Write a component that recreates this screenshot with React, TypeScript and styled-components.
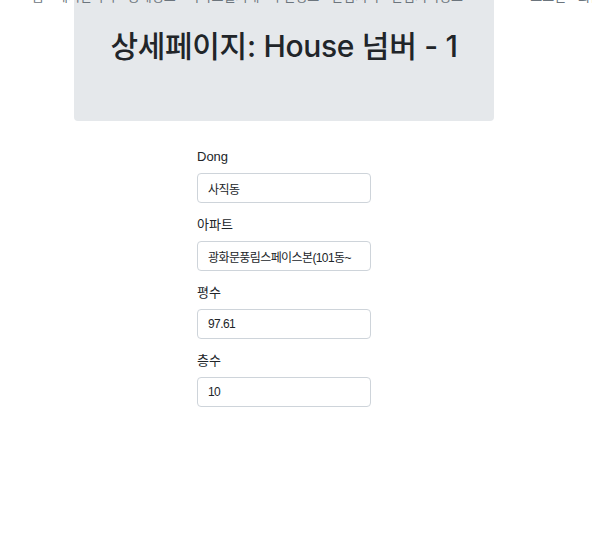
import React from "react";
import styled, { createGlobalStyle } from "styled-components";

const Global = createGlobalStyle`
  html, body { margin: 0; padding: 0; background: #fff; }
  body {
    font-family: "Liberation Sans", "Noto Sans CJK KR", sans-serif;
    color: #212529;
    overflow: hidden;
  }
`;

const Page = styled.div`
  position: relative;
  width: 592px;
  height: 539px;
`;

const Nav = styled.nav`
  position: absolute;
  left: 0;
  right: 0;
  top: -12px;
  height: 16px;
  display: flex;
  align-items: flex-end;
  justify-content: space-between;
  padding: 0 0 0 32px;
  font-size: 13px;
  color: #6c757d;
  font-family: "Noto Sans CJK KR", sans-serif;
  line-height: 16px;
  white-space: nowrap;
  overflow: hidden;
`;

const NavGroup = styled.div<{ $shift?: number }>`
  display: flex;
  gap: 12px;
  margin-right: ${(p) => p.$shift ?? 0}px;
`;

const Jumbo = styled.header`
  margin: 0 0 0 74px;
  width: 420px;
  height: 121px;
  background: #e5e8eb;
  border-radius: 0 0 4px 4px;
  box-sizing: border-box;
  padding-top: 27px;
  text-align: center;
`;

const Title = styled.h1`
  margin: 0;
  font-size: 30px;
  font-weight: 500;
  line-height: 38px;
  color: #212529;
  font-family: "Inter", "Noto Sans CJK KR", sans-serif;
  letter-spacing: -0.3px;
`;

const Form = styled.form`
  width: 174px;
  margin: 27px 0 0 197px;
  display: flex;
  flex-direction: column;
  gap: 13px;
`;

const Group = styled.div`
  display: flex;
  flex-direction: column;
  gap: 8px;
`;

const Label = styled.label`
  font-size: 13px;
  line-height: 17px;
  color: #212529;
  font-family: "Liberation Sans", "Noto Sans CJK KR", sans-serif;
`;

const Input = styled.input`
  box-sizing: border-box;
  width: 174px;
  height: 30px;
  padding: 0 10px;
  border: 1px solid #ced4da;
  border-radius: 4px;
  font-size: 12px;
  letter-spacing: -0.6px;
  color: #212529;
  font-family: "Liberation Sans", "Noto Sans CJK KR", sans-serif;
  background: #fff;
  outline: none;
`;

const fields = [
  { label: "Dong", value: "사직동" },
  { label: "아파트", value: "광화문풍림스페이스본(101동~" },
  { label: "평수", value: "97.61" },
  { label: "층수", value: "10" },
];

export default function App() {
  return (
    <Page>
      <Global />
      <Jumbo>
        <Title>상세페이지: House 넘버 - 1</Title>
      </Jumbo>
      <Nav>
        <NavGroup>
          <span>홈</span>
          <span>게시판목록</span>
          <span>동네정보</span>
          <span>아파트실거래</span>
          <span>주변정보</span>
          <span>관심지역</span>
          <span>관심지역정보</span>
        </NavGroup>
        <NavGroup $shift={-10}>
          <span>로그인</span>
          <span>회원</span>
        </NavGroup>
      </Nav>
      <Form>
        {fields.map((f) => (
          <Group key={f.label}>
            <Label>{f.label}</Label>
            <Input readOnly value={f.value} />
          </Group>
        ))}
      </Form>
    </Page>
  );
}
